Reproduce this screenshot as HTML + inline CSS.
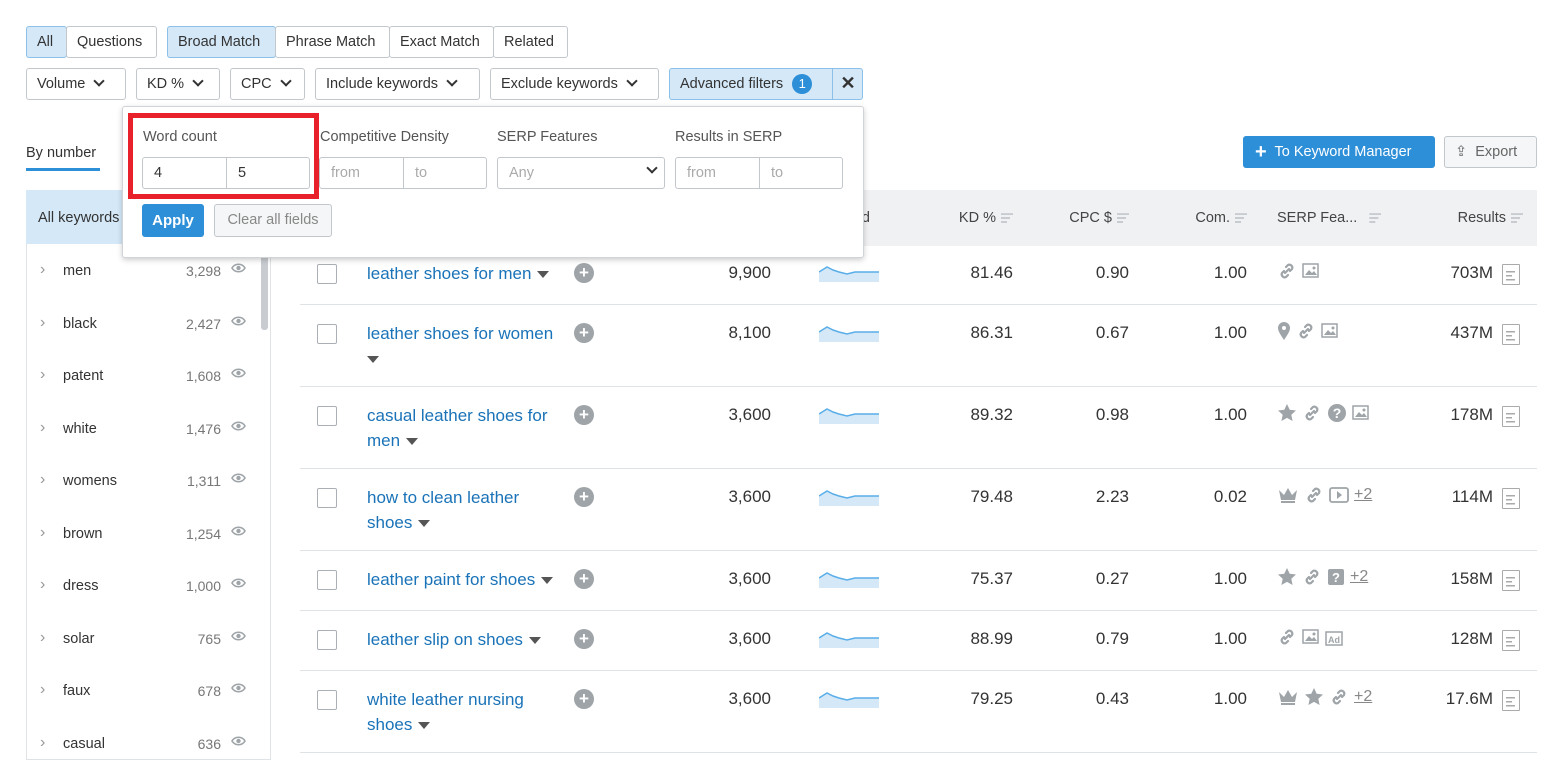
<!DOCTYPE html>
<html><head><style>
*{box-sizing:border-box;margin:0;padding:0}
body{width:1555px;height:760px;overflow:hidden;background:#fff;font-family:"Liberation Sans",sans-serif;font-size:15px;color:#333;position:relative}
.a{position:absolute}
.btn{position:absolute;height:32px;border:1px solid #c2c7cc;border-radius:3px;background:#fff;line-height:30px;padding:0 10px;font-size:14.5px;color:#333;white-space:nowrap}
.sel{background:#d4e8f8;border-color:#8cc0e8}
.chev{display:inline-block;width:8px;height:8px;border-right:2.5px solid #333;border-bottom:2.5px solid #333;transform:rotate(45deg);margin-left:10px;position:relative;top:-3px}
.inp{position:absolute;height:32px;border:1px solid #c2c7cc;border-radius:3px;background:#fff;font-size:14.5px;color:#aaa;line-height:30px}
.inp span{position:absolute;top:0}
.lbl{position:absolute;font-size:14.5px;color:#555;top:129px}
.kw{position:absolute;left:63px;font-size:14.5px;color:#333}
.row{position:absolute;left:300px;width:1237px;border-bottom:1px solid #e0e3e6}
.cb{position:absolute;left:17px;width:20px;height:20px;border:1px solid #aab0b5;border-radius:2px}
.link{position:absolute;left:67px;color:#1a73b8;font-size:17px;line-height:25px;width:198px}
.tri{display:inline-block;border-left:6px solid transparent;border-right:6px solid transparent;border-top:7px solid #555;margin-left:6px;vertical-align:middle}
.plus{position:absolute;left:274px;width:20px;height:20px;border-radius:50%;background:#9ea4a8;color:#fff;font-weight:bold;text-align:center;line-height:20px;font-size:17px}
.num{position:absolute;font-size:17px;color:#333;text-align:right}
.hd{position:absolute;top:190px;height:56px;background:#f0f1f3;font-size:14.5px;color:#444;line-height:56px;text-align:right;border-right:1px solid #e0e3e6}
.fi{display:inline-block;width:12px;height:10px;vertical-align:middle;margin-left:5px;background:linear-gradient(#c8ccd0 0 2px,transparent 2px 4px,#c8ccd0 4px 6px,transparent 6px 8px,#c8ccd0 8px 10px);clip-path:polygon(0 0,100% 0,100% 20%,75% 20%,75% 60%,50% 60%,50% 100%,0 100%,0 0)}
.doc{position:absolute;left:1202px;width:18px;height:21px;border:1.5px solid #aaa;border-radius:1px;background:linear-gradient(#aaa,#aaa) 3px 6px/9px 1.5px no-repeat,linear-gradient(#aaa,#aaa) 3px 10px/6px 1.5px no-repeat,linear-gradient(#aaa,#aaa) 3px 14px/9px 1.5px no-repeat}
.ic{position:absolute;color:#9ea4a8;font-size:16px;display:flex;align-items:center;gap:5px}
.ic u{color:#888;font-size:16px}
.ic svg{display:block}
</style></head><body>

<div class="btn sel" style="left:26px;top:26px;width:41px">All</div>
<div class="btn" style="left:66px;top:26px;width:91px">Questions</div>
<div class="btn sel" style="left:167px;top:26px;width:109px">Broad Match</div>
<div class="btn" style="left:275px;top:26px;width:115px">Phrase Match</div>
<div class="btn" style="left:389px;top:26px;width:105px">Exact Match</div>
<div class="btn" style="left:493px;top:26px;width:75px">Related</div>

<div class="btn" style="left:26px;top:68px;width:100px">Volume<i class="chev"></i></div>
<div class="btn" style="left:136px;top:68px;width:84px">KD %<i class="chev"></i></div>
<div class="btn" style="left:230px;top:68px;width:75px">CPC<i class="chev"></i></div>
<div class="btn" style="left:315px;top:68px;width:165px">Include keywords<i class="chev"></i></div>
<div class="btn" style="left:490px;top:68px;width:169px">Exclude keywords<i class="chev"></i></div>
<div class="btn sel" style="left:669px;top:68px;width:194px">Advanced filters <span style="display:inline-block;width:20px;height:20px;border-radius:50%;background:#2d8fd8;color:#fff;text-align:center;line-height:20px;font-size:13px;margin-left:5px">1</span><span style="position:absolute;left:162px;top:-1px;height:32px;border-left:1px solid #8cc0e8;width:31px;text-align:center;font-weight:bold;font-size:18px">✕</span></div>

<div class="a" style="left:26px;top:145px;font-size:14.5px">By number</div>
<div class="a" style="left:26px;top:168px;width:74px;height:3px;background:#2d8fd8"></div>

<div class="a" style="left:26px;top:190px;width:245px;height:570px;border:1px solid #e0e3e6;border-top:none"></div>
<div class="a" style="left:26px;top:190px;width:244px;height:54px;background:#d4e8f8;padding:20px 12px;font-size:14.5px">All keywords</div>
<div class="a" style="left:261px;top:255px;width:7px;height:75px;background:#c8ccd0;border-radius:3px"></div>
<div id="kws"></div>

<div class="hd" style="left:300px;width:611px;padding-right:40px">d</div>
<div class="hd" style="left:910px;width:118px;padding-right:14px">KD %<i class="fi"></i></div>
<div class="hd" style="left:1027px;width:117px;padding-right:14px">CPC $<i class="fi"></i></div>
<div class="hd" style="left:1143px;width:119px;padding-right:14px">Com.<i class="fi"></i></div>
<div class="hd" style="left:1261px;width:132px;text-align:left;padding-left:16px">SERP Fea...<i class="fi" style="margin-left:12px"></i></div>
<div class="hd" style="left:1392px;width:145px;padding-right:14px;border-right:none">Results<i class="fi"></i></div>

<div class="a" style="left:1243px;top:136px;width:192px;height:32px;background:#2d8fd8;border-radius:3px;color:#fff;font-size:14.5px;line-height:32px;padding-left:12px"><b style="font-size:20px;vertical-align:-2px">+</b>&nbsp; To Keyword Manager</div>
<div class="btn" style="left:1444px;top:136px;width:93px;background:#f5f6f7;color:#666">⇪&nbsp; Export</div>

<div id="rows"></div>

<div class="a" style="left:122px;top:106px;width:742px;height:152px;background:#fff;border:1px solid #d0d4d8;border-radius:3px;box-shadow:0 2px 6px rgba(0,0,0,.2)"></div>
<div class="a" style="left:128px;top:113px;width:191px;height:86px;border:5px solid #e8202a"></div>
<div class="lbl" style="left:143px">Word count</div>
<div class="lbl" style="left:320px">Competitive Density</div>
<div class="lbl" style="left:497px">SERP Features</div>
<div class="lbl" style="left:675px">Results in SERP</div>
<div class="inp" style="left:142px;top:157px;width:168px;color:#333"><span style="left:11px">4</span><span style="left:83px;border-left:1px solid #c2c7cc;height:30px;padding-left:11px">5</span></div>
<div class="inp" style="left:319px;top:157px;width:168px"><span style="left:11px">from</span><span style="left:83px;border-left:1px solid #c2c7cc;height:30px;padding-left:11px">to</span></div>
<div class="inp" style="left:497px;top:157px;width:168px"><span style="left:11px">Any</span><span style="left:140px;top:-2px"><i class="chev" style="border-color:#333"></i></span></div>
<div class="inp" style="left:675px;top:157px;width:168px"><span style="left:11px">from</span><span style="left:83px;border-left:1px solid #c2c7cc;height:30px;padding-left:11px">to</span></div>
<div class="a" style="left:142px;top:204px;width:62px;height:33px;background:#2d8fd8;border-radius:3px;color:#fff;font-size:15px;font-weight:bold;line-height:33px;text-align:center">Apply</div>
<div class="a" style="left:214px;top:204px;width:118px;height:33px;background:#f5f6f7;border:1px solid #c2c7cc;border-radius:3px;color:#888;font-size:14.5px;line-height:31px;text-align:center">Clear all fields</div>

<script>
var I={
L:'<svg width="20" height="20" viewBox="0 0 20 20"><path d="M8 12l4-4M9 6l2-2a3 3 0 014 4l-2 2M11 14l-2 2a3 3 0 01-4-4l2-2" stroke="#9ea4a8" stroke-width="2.2" fill="none" stroke-linecap="round"/></svg>',
P:'<svg width="18" height="18" viewBox="0 0 18 18"><rect x="1" y="2" width="15" height="13" fill="none" stroke="#9ea4a8" stroke-width="1.5"/><path d="M3 13l4-5 3 3 2-2 3 4z" fill="#9ea4a8"/><circle cx="12" cy="6" r="1.5" fill="#9ea4a8"/></svg>',
M:'<svg width="14" height="20" viewBox="0 0 14 20"><path d="M7 19C3 13 1 10 1 7a6 6 0 0112 0c0 3-2 6-6 12z" fill="#9ea4a8"/><circle cx="7" cy="7" r="2" fill="#fff"/></svg>',
S:'<svg width="20" height="20" viewBox="0 0 20 20"><path d="M10 1l2.7 5.8 6.3.7-4.7 4.3 1.3 6.2L10 14.9 4.4 18l1.3-6.2L1 7.5l6.3-.7z" fill="#9ea4a8"/></svg>',
Q:'<svg width="20" height="20" viewBox="0 0 20 20"><circle cx="10" cy="10" r="9" fill="#9ea4a8"/><text x="10" y="15" font-size="14" font-weight="bold" text-anchor="middle" fill="#fff" font-family="Liberation Sans">?</text></svg>',
B:'<svg width="18" height="18" viewBox="0 0 18 18"><rect x="1" y="1" width="16" height="16" rx="2" fill="#9ea4a8"/><text x="9" y="14" font-size="13" font-weight="bold" text-anchor="middle" fill="#fff" font-family="Liberation Sans">?</text></svg>',
C:'<svg width="22" height="20" viewBox="0 0 22 20"><path d="M2 5l5 5 4-7 4 7 5-5-2 10H4zM4 16h14v2H4z" fill="#9ea4a8"/></svg>',
V:'<svg width="20" height="18" viewBox="0 0 20 18"><rect x="1" y="2" width="18" height="14" rx="2" fill="none" stroke="#9ea4a8" stroke-width="1.8"/><path d="M8 5l5 4-5 4z" fill="#9ea4a8"/></svg>',
A:'<svg width="18" height="18" viewBox="0 0 18 18"><rect x="1" y="4" width="16" height="13" fill="none" stroke="#9ea4a8" stroke-width="1.5"/><text x="9" y="15" font-size="9" font-weight="bold" text-anchor="middle" fill="#9ea4a8" font-family="Liberation Sans">Ad</text></svg>',
T:'<u>+2</u>'};
var k=[["men","3,298"],["black","2,427"],["patent","1,608"],["white","1,476"],["womens","1,311"],["brown","1,254"],["dress","1,000"],["solar","765"],["faux","678"],["casual","636"]];
var h="";k.forEach(function(e,i){var y=263+i*52.5;h+='<div class="a" style="left:40px;top:'+(y-2)+'px;color:#999;font-size:16px">›</div><div class="kw" style="top:'+y+'px">'+e[0]+'</div><div class="a" style="left:150px;width:71px;text-align:right;top:'+y+'px;color:#777;font-size:14px">'+e[1]+'</div><svg class="a" style="left:231px;top:'+(y-1)+'px" width="15" height="12" viewBox="0 0 15 12"><path d="M1 6c3-5 10-5 13 0-3 5-10 5-13 0z" fill="none" stroke="#9ea4a8" stroke-width="1.6"/><circle cx="7.5" cy="6" r="2.2" fill="#9ea4a8"/></svg>';});
document.getElementById("kws").innerHTML=h;
var r=[[245,60,"leather shoes for men",1,"9,900","81.46","0.90","1.00","LP","703M"],
[305,82,"leather shoes for women",0,"8,100","86.31","0.67","1.00","MLP","437M"],
[387,82,"casual leather shoes for men",1,"3,600","89.32","0.98","1.00","SLQP","178M"],
[469,82,"how to clean leather shoes",1,"3,600","79.48","2.23","0.02","CLVT","114M"],
[551,60,"leather paint for shoes",1,"3,600","75.37","0.27","1.00","SLBT","158M"],
[611,60,"leather slip on shoes",1,"3,600","88.99","0.79","1.00","LPA","128M"],
[671,82,"white leather nursing shoes",1,"3,600","79.25","0.43","1.00","CSLT","17.6M"]];
h="";r.forEach(function(e){var t=e[0],H=e[1],ty=17;
var lk=e[3]?e[2]+'<i class="tri"></i>':e[2]+'<br><i class="tri" style="margin-left:0"></i>';
var ic=e[8].split("").map(function(c){return I[c]}).join("");
h+='<div class="row" style="top:'+t+'px;height:'+H+'px"><div class="cb" style="top:'+(ty+2)+'px"></div><div class="link" style="top:'+(ty-1)+'px">'+lk+'</div><div class="plus" style="top:'+(ty+1)+'px">+</div><div class="num" style="left:400px;width:71px;top:'+(ty+1)+'px">'+e[4]+'</div><svg class="a" style="left:519px;top:'+(ty+2)+'px" width="60" height="18"><path d="M0 8 L8 3 L14 6 L20 8 L28 10 L36 8 L60 8 L60 18 L0 18Z" fill="#d4e8f8"/><path d="M0 8 L8 3 L14 6 L20 8 L28 10 L36 8 L60 8" stroke="#5aaee8" fill="none" stroke-width="1.5"/></svg><div class="num" style="left:640px;width:73px;top:'+(ty+1)+'px">'+e[5]+'</div><div class="num" style="left:760px;width:69px;top:'+(ty+1)+'px">'+e[6]+'</div><div class="num" style="left:880px;width:67px;top:'+(ty+1)+'px">'+e[7]+'</div><div class="ic" style="left:977px;top:'+(ty-1)+'px">'+ic+'</div><div class="num" style="left:1100px;width:93px;top:'+(ty+1)+'px">'+e[9]+'</div><div class="doc" style="top:'+(ty+2)+'px"></div></div>';});
document.getElementById("rows").innerHTML=h;
</script>
</body></html>
